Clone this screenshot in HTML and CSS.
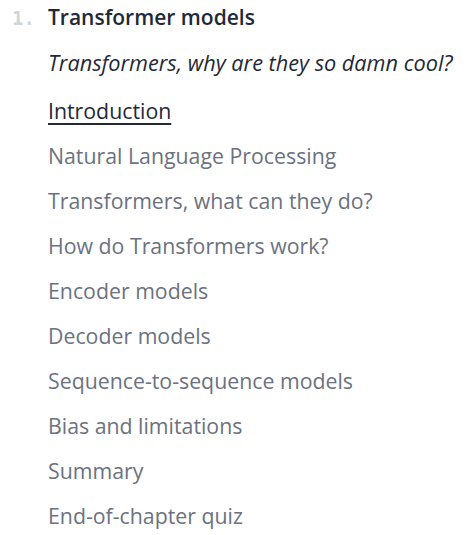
FILE: index.html
```html
<!DOCTYPE html>
<html>
<head>
<meta charset="utf-8">
<link rel="stylesheet" href="styles.css">
</head>
<body>
<div class="chapter">
  <div class="chapter-head">
    <span class="num">1.</span>
    <span class="title">Transformer models</span>
  </div>
  <p class="subtitle">Transformers, why are they so damn cool?</p>
  <ul class="sections">
    <li><a class="active" href="#">Introduction</a></li>
    <li><a href="#">Natural Language Processing</a></li>
    <li><a href="#">Transformers, what can they do?</a></li>
    <li><a href="#">How do Transformers work?</a></li>
    <li><a href="#">Encoder models</a></li>
    <li><a href="#">Decoder models</a></li>
    <li><a href="#">Sequence-to-sequence models</a></li>
    <li><a href="#">Bias and limitations</a></li>
    <li><a href="#">Summary</a></li>
    <li><a href="#">End-of-chapter quiz</a></li>
  </ul>
</div>
</body>
</html>
```

FILE: styles.css
```css
html, body {
  margin: 0;
  padding: 0;
  background: #ffffff;
}
body {
  font-family: "Open Sans", "Liberation Sans", sans-serif;
  font-variant-ligatures: none;
}
.chapter-head {
  display: flex;
  align-items: baseline;
  height: 34px;
  line-height: 34px;
}
.num {
  width: 48px;
  box-sizing: border-box;
  padding-left: 12px;
  font-family: "DejaVu Sans Mono", monospace;
  font-weight: bold;
  font-size: 19px;
  color: #d1d5db;
}
.title {
  font-size: 21px;
  font-weight: 600;
  color: #1f2937;
}
.subtitle {
  margin: 12px 0 0 0;
  padding-left: 48px;
  height: 34px;
  line-height: 34px;
  font-style: italic;
  font-size: 21.7px;
  color: #1f2937;
}
.sections {
  list-style: none;
  margin: 0;
  padding: 8px 0 0 48px;
}
.sections li {
  height: 45px;
  line-height: 45px;
  font-size: 21.3px;
}
.sections a {
  color: #6b7280;
  text-decoration: none;
}
.sections a.active {
  color: #1f2937;
  text-decoration: underline;
  text-decoration-thickness: 2px;
  text-underline-offset: 4px;
}
```
